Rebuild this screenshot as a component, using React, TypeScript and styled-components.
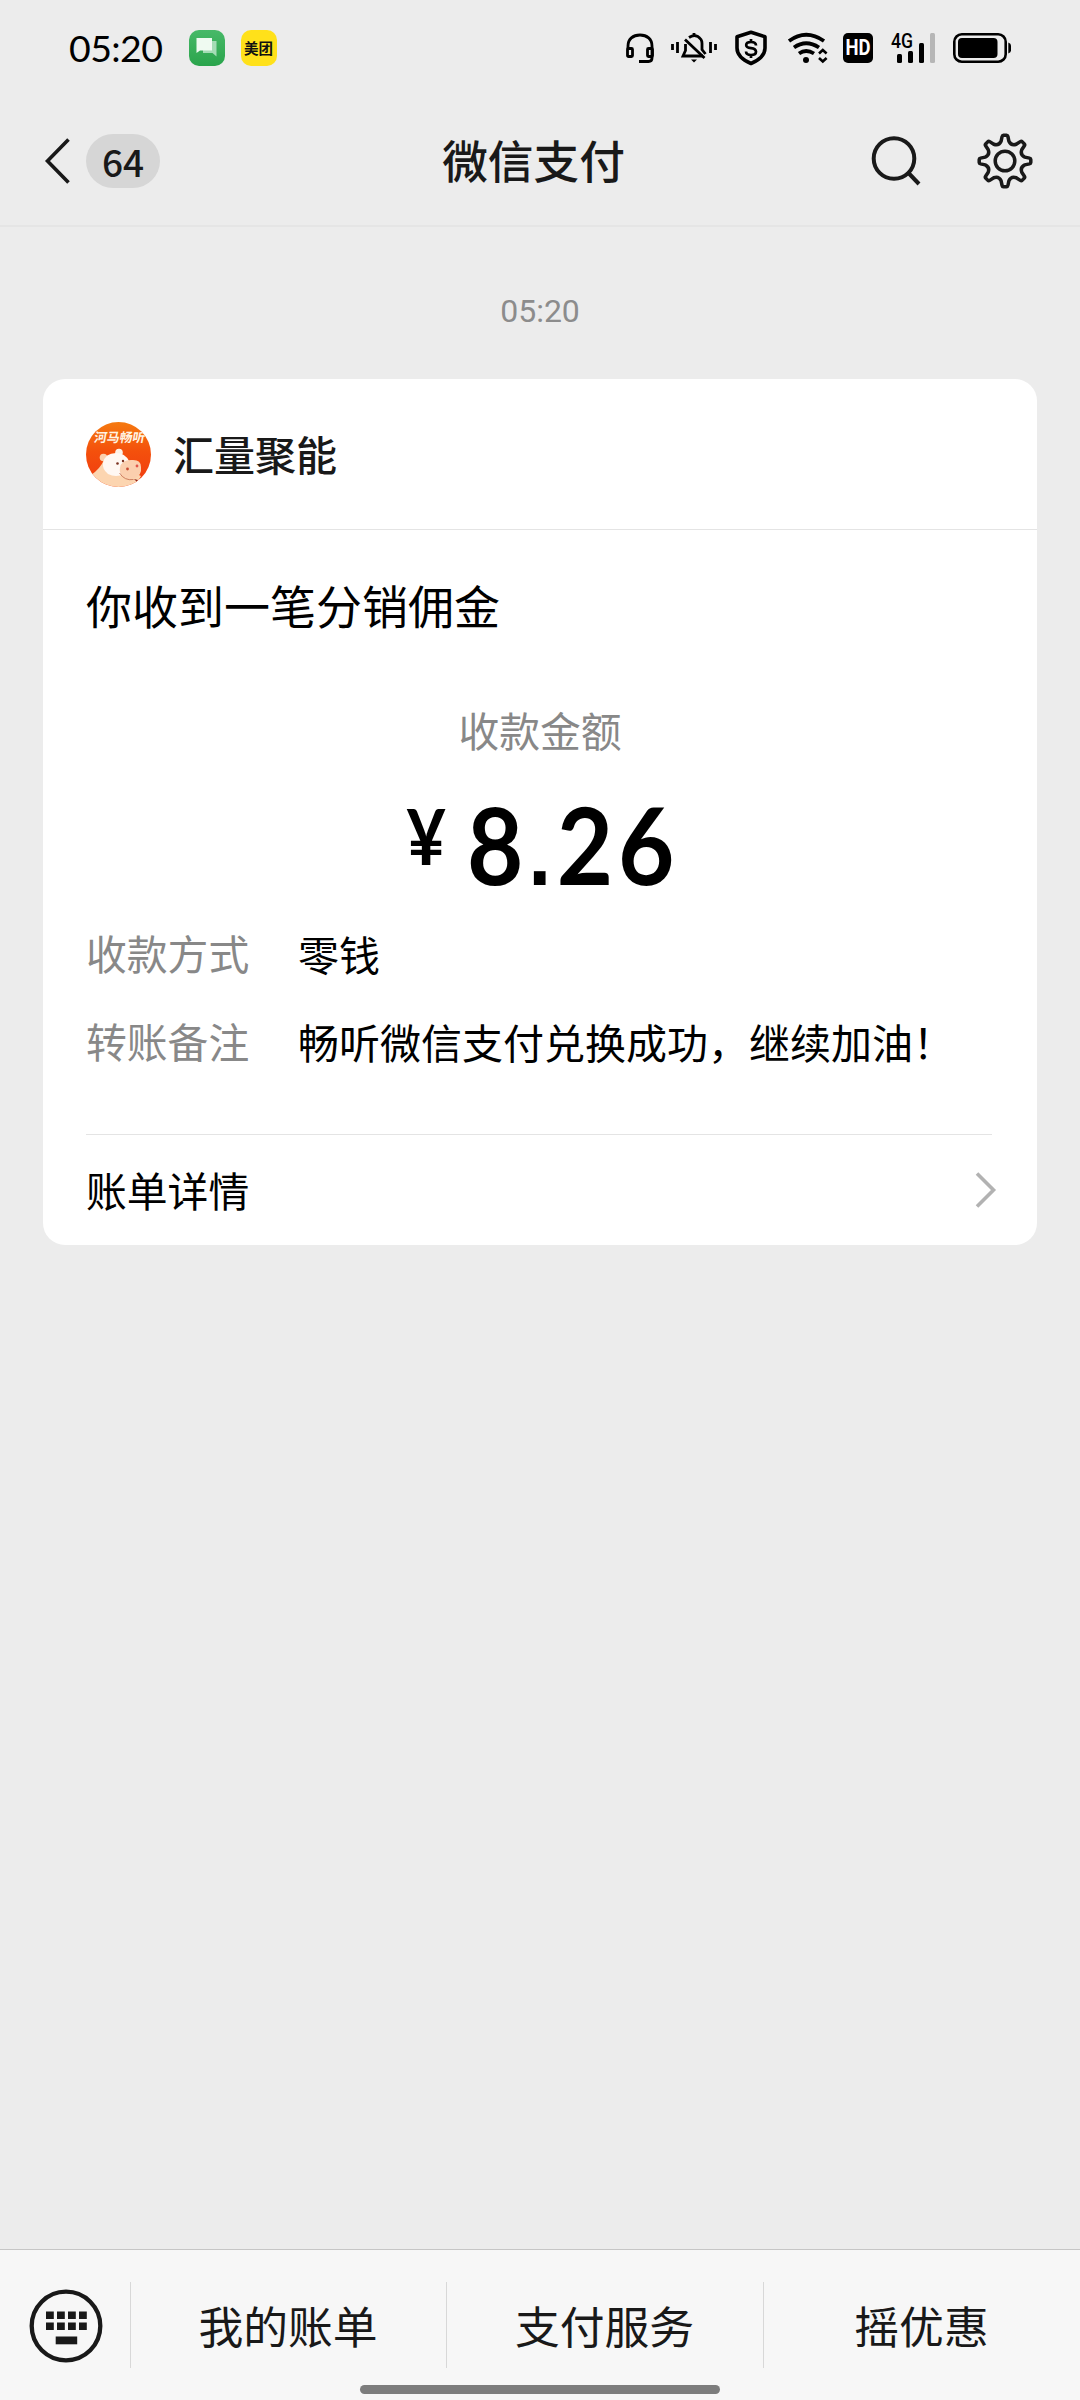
import React from "react";
import styled, { createGlobalStyle } from "styled-components";

const cjk = '"Noto Sans CJK SC", "Noto Sans", sans-serif';

const GlobalStyle = createGlobalStyle`
  * { box-sizing: border-box; }
  body { margin: 0; background: #ececec; }
  svg { display: block; flex: none; overflow: visible; }
`;

const Screen = styled.div`
  width: 1080px;
  height: 2400px;
  display: flex;
  flex-direction: column;
  background: #ececec;
  color: #191919;
  font-family: ${cjk};
  overflow: hidden;
`;

const StatusBar = styled.div`
  height: 96px;
  padding: 0 68px 0 69px;
  display: flex;
  align-items: center;
  justify-content: space-between;
`;

const StatusGroup = styled.div`
  display: flex;
  align-items: center;
`;

const Clock = styled.span`
  width: 120px;
  font: 400 37.5px/48px Lato, sans-serif;
  letter-spacing: -0.6px;
  color: #000;
`;

const AppBadge = styled.span<{ $bg: string }>`
  width: 36px;
  height: 36px;
  margin-right: 15.5px;
  border-radius: 10px;
  display: flex;
  align-items: center;
  justify-content: center;
  background: ${(p) => p.$bg};
  color: #111;
  font: 700 14.5px/20px ${cjk};
`;

const HdBadge = styled.span`
  width: 30px;
  height: 30px;
  margin-right: 18px;
  border-radius: 5px;
  display: flex;
  align-items: center;
  justify-content: center;
  background: #000;
`;

const HdText = styled.span`
  color: #fff;
  font: 700 22px/30px Roboto, sans-serif;
  transform: scaleX(0.84);
`;

const IconSlot = styled.span<{ $gap: number }>`
  margin-right: ${(p) => p.$gap}px;
`;

const NavBar = styled.header`
  height: 131px;
  padding: 0 47px 0 44px;
  display: grid;
  grid-template-columns: 1fr auto 1fr;
  align-items: start;
  border-bottom: 2px solid #e5e5e5;
`;

const NavSide = styled.div<{ $end?: boolean }>`
  height: 130px;
  display: flex;
  align-items: center;
  justify-content: ${(p) => (p.$end ? "flex-end" : "flex-start")};
  gap: ${(p) => (p.$end ? 56 : 15)}px;
`;

const Unread = styled.span`
  width: 74px;
  height: 54px;
  border-radius: 27px;
  display: flex;
  align-items: center;
  justify-content: center;
  background: #d6d6d6;
  font: 500 37px/50px ${cjk};
  padding-bottom: 1px;
`;

const Title = styled.h1`
  margin: 0 10px 0 0;
  font: 500 45.7px/126px ${cjk};
`;

const Chat = styled.main`
  flex: 1;
  padding: 0 43px;
`;

const Timestamp = styled.div`
  margin: 60px 0 44px;
  text-align: center;
  font: 400 32px/48px Roboto, sans-serif;
  color: #8c8c8c;
`;

const Card = styled.section`
  height: 866px;
  border-radius: 22px;
  background: #fff;
`;

const CardHeader = styled.div`
  height: 151px;
  padding: 0 43px;
  display: flex;
  align-items: center;
  gap: 22px;
  border-bottom: 1px solid #e4e4e4;
`;

const Merchant = styled.span`
  padding-bottom: 2px;
  font: 500 41px/60px ${cjk};
`;

const CardBody = styled.div`
  padding: 44px 43px 0;
  color: #000;
`;

const Headline = styled.div`
  font: 400 46px/60px ${cjk};
`;

const AmountLabel = styled.div`
  margin-top: 66px;
  text-align: center;
  font: 400 40.8px/60px ${cjk};
  color: #888;
`;

const Amount = styled.div`
  margin-top: 28px;
  height: 109px;
  display: flex;
  justify-content: center;
  align-items: flex-start;
  font: 700 108px/110px Lato, sans-serif;
`;

const Currency = styled.span`
  font-size: 76px;
  line-height: 95px;
  margin-right: 19px;
  transform: scaleX(0.9);
`;

const Digits = styled.span`
  letter-spacing: 5.5px;
  margin-right: -27px;
  transform: scaleX(0.9);
  transform-origin: left;
`;

const Point = styled.span`
  font-family: "Liberation Sans", sans-serif;
  font-size: 92px;
  font-weight: 700;
  letter-spacing: 6px;
`;

const Details = styled.dl`
  margin: 26px 0 63px;
  display: grid;
  grid-template-columns: 212px 1fr;
  row-gap: 28px;
  font: 400 40.8px/60px ${cjk};
`;

const Term = styled.dt`
  color: #888;
`;

const Value = styled.dd`
  margin: 0;
  white-space: nowrap;
  font-size: 41px;
`;

const BillLink = styled.div`
  height: 111px;
  margin-right: 2px;
  border-top: 1px solid #e4e4e4;
  display: flex;
  align-items: center;
  justify-content: space-between;
  font: 400 40.8px/60px ${cjk};
`;

const Chevron = styled.svg`
  margin-right: -3px;
`;

const MenuBar = styled.footer`
  position: relative;
  height: 151px;
  padding-top: 32px;
  border-top: 1px solid #c6c6c6;
  background: #f7f7f7;
  display: grid;
  grid-template-columns: 130px 316px 317px 317px;
`;

const KeyboardButton = styled.div`
  height: 88px;
  padding-left: 1px;
  display: flex;
  align-items: center;
  justify-content: center;
`;

const MenuItem = styled.div`
  height: 86px;
  padding-right: 1px;
  border-left: 1px solid #d8d8d8;
  text-align: center;
  font: 400 44.8px/86px ${cjk};
`;

const HomeHandle = styled.div`
  position: absolute;
  left: 360px;
  bottom: 6px;
  width: 360px;
  height: 9px;
  border-radius: 5px;
  background: #7d7d7d;
`;

const gearPath = (() => {
  const at = (deg: number, r: number, off: number) => {
    const a = (deg * Math.PI) / 180;
    return `${(28 + r * Math.sin(a) + off * Math.cos(a)).toFixed(2)} ${(28 - r * Math.cos(a) + off * Math.sin(a)).toFixed(2)}`;
  };
  let d = "";
  for (let k = 0; k < 8; k++) {
    const t = k * 45;
    d += `${k ? "L" : "M"}${at(t, 19.8, -3.9)} L${at(t, 24.5, -2.9)} Q${at(t, 25.8, -2.6)} ${at(t, 25.8, -1.6)} L${at(t, 25.8, 1.6)} Q${at(t, 25.8, 2.6)} ${at(t, 24.5, 2.9)} L${at(t, 19.8, 3.9)} Q${at(t + 22.5, 16.2, 0)} ${at(t + 45, 19.8, -3.9)} `;
  }
  return d + "Z";
})();

const Messages = () => (
  <svg width="24" height="24" viewBox="0 0 24 24">
    <path d="M8 5h13.5v15.5L17.5 17H8z" fill="#a4dcb5" />
    <path d="M1.500 2H17v12.500H5L1.500 17z" fill="#effaf1" />
  </svg>
);

const Headset = () => (
  <svg width="30" height="32" viewBox="0 0 30 32" fill="none" stroke="#000">
    <path d="M3 17v-3C3 7 8 3 15 3s12 4 12 11v12q0 3.500-3.500 3.500H14" strokeWidth="2.8" />
    <rect x="2.500" y="16.500" width="5" height="8" rx="1" strokeWidth="2.8" />
    <rect x="22.500" y="16.500" width="5" height="8" rx="1" strokeWidth="2.8" />
  </svg>
);

const MutedBell = () => (
  <svg width="46" height="32" viewBox="0 0 46 32" fill="none" stroke="#000" strokeWidth="2.8">
    <path d="M1.500 12v6M6.500 10v11M39.500 10v11M44.500 12v6M14 7.500l19.500 18.500" />
    <path d="M14.500 12v6.500l-2.500 5.500h20M18 5.500q7-4.500 12 2 1 1.500 1 4v6l3.500 4.500" />
    <path d="M23 1v3" />
    <path d="M20 27.500h6l-3 3z" fill="#000" stroke="none" />
  </svg>
);

const Shield = () => (
  <svg width="34" height="36" viewBox="0 0 34 36" fill="none" stroke="#000">
    <path d="M17 2.300L31 6.800V18q0 9.500-14 15.500Q3 27.500 3 18V6.800z" strokeWidth="3.600" strokeLinejoin="round" />
    <path d="M22 15.500q0-3.500-5-3.500-4.800 0-4.800 3 0 2.600 4.800 3.200t5 3.500q0 3.300-5 3.300-4.800 0-5-3.500M17 9v3.500M17 24.500v3.500" strokeWidth="2.700" />
  </svg>
);

const Wifi = () => (
  <svg width="42" height="32" viewBox="0 0 42 32" fill="none" stroke="#000" strokeWidth="3.800">
    <path d="M2 9q17-12.500 35 0M7 15.500q12-8.500 25 0M12 21.500q7-5 15 0" />
    <circle cx="19" cy="28" r="3" fill="#000" stroke="none" />
    <path d="M32 21.500l3.800-3.500 3.800 3.500M32 26l3.800 3.500 3.800-3.500" strokeWidth="2.600" />
  </svg>
);

const Signal = () => (
  <svg width="44" height="32" viewBox="0 0 44 32">
    <text x="0" y="16" fontFamily="Roboto, sans-serif" fontWeight="500" fontSize="20" textLength="22" lengthAdjust="spacingAndGlyphs">4G</text>
    <rect x="6" y="22" width="5" height="9" rx="1.500" />
    <rect x="17" y="19" width="5" height="12" rx="1.500" />
    <rect x="28" y="11" width="5" height="20" rx="1.500" />
    <rect x="39" y="1" width="5" height="30" rx="1.500" fill="#b6b6b6" />
  </svg>
);

const Battery = () => (
  <svg width="59" height="30" viewBox="0 0 59 30">
    <rect x="1.300" y="1.300" width="51.400" height="27.400" rx="7.500" fill="none" stroke="#000" strokeWidth="2.600" />
    <rect x="5" y="5" width="39.500" height="20" rx="4" />
    <path d="M55.300 9.500q2.700 1 2.700 3v5q0 2-2.700 3z" />
  </svg>
);

const Avatar = () => (
  <svg width="65" height="65" viewBox="0 0 65 65">
    <defs>
      <clipPath id="avatarClip"><circle cx="32.500" cy="32.500" r="32.500" /></clipPath>
      <linearGradient id="avatarSky" x1="0" y1="0" x2="0" y2="1">
        <stop offset="0" stopColor="#f57a10" />
        <stop offset="0.450" stopColor="#f4500c" />
        <stop offset="1" stopColor="#f03a10" />
      </linearGradient>
    </defs>
    <g clipPath="url(#avatarClip)">
      <rect width="65" height="65" fill="url(#avatarSky)" />
      <path d="M5 53Q14 47 18 38L46 50 55 54Q50 66 28 66 12 66 5 53z" fill="#fcd5b0" />
      <circle cx="17.500" cy="35.500" r="3.800" fill="#fbd0ae" />
      <circle cx="33" cy="30.500" r="3.800" fill="#fdf1e6" />
      <path d="M17 41Q19 31 30 31 39 31 43 39L38 52Q30 56 22 52 16 47 17 41z" fill="#fff8f3" />
      <path d="M34 46Q35 38 45 38 55 37 55 45 56 53 49 56 41 59 36 54 33 50 34 46z" fill="#fbcfae" />
      <path d="M33.500 51q5 8 14 6.500" fill="none" stroke="#c0684a" strokeWidth="0.800" />
      <path d="M48 57l4 1-1 2z" fill="#8e2419" />
      <circle cx="31.500" cy="41.500" r="1.300" fill="#7b3220" />
      <circle cx="37" cy="39" r="1.200" fill="#7b3220" />
      <circle cx="41.500" cy="47" r="1.400" fill="#c94b32" />
      <circle cx="51" cy="44" r="1.400" fill="#e0554a" />
      <text x="0" y="0" transform="translate(7.500 19.500) skewX(-10)" fontFamily={cjk} fontWeight="700" fontSize="12.800" fill="#fff3e2">河马畅听</text>
    </g>
  </svg>
);

const details = [
  { term: "收款方式", value: "零钱" },
  { term: "转账备注", value: "畅听微信支付兑换成功，继续加油！" },
];

const menu = ["我的账单", "支付服务", "摇优惠"];

export default function App() {
  return (
    <>
      <GlobalStyle />
      <Screen lang="zh-CN">
        <StatusBar>
          <StatusGroup>
            <Clock>05:20</Clock>
            <AppBadge $bg="linear-gradient(#47b968, #2aa44c)"><Messages /></AppBadge>
            <AppBadge $bg="#ffe11a">美团</AppBadge>
          </StatusGroup>
          <StatusGroup>
            <IconSlot $gap={16}><Headset /></IconSlot>
            <IconSlot $gap={17}><MutedBell /></IconSlot>
            <IconSlot $gap={19}><Shield /></IconSlot>
            <IconSlot $gap={14}><Wifi /></IconSlot>
            <HdBadge><HdText>HD</HdText></HdBadge>
            <IconSlot $gap={18}><Signal /></IconSlot>
            <Battery />
          </StatusGroup>
        </StatusBar>

        <NavBar>
          <NavSide>
            <svg width="27" height="46" viewBox="0 0 27 46" fill="none" stroke="#191919" strokeWidth="3.600">
              <path d="M24.500 1.500L3.500 23l21 21.500" />
            </svg>
            <Unread>64</Unread>
          </NavSide>
          <Title>微信支付</Title>
          <NavSide $end>
            <svg width="50" height="50" viewBox="0 0 50 50" fill="none" stroke="#191919" strokeWidth="4">
              <circle cx="23" cy="22.500" r="20.300" />
              <path d="M37.500 37L48 48" />
            </svg>
            <svg width="56" height="56" viewBox="0 0 56 56" fill="none" stroke="#191919" strokeWidth="3.500" strokeLinejoin="round">
              <path d={gearPath} />
              <circle cx="28" cy="28" r="9.800" />
            </svg>
          </NavSide>
        </NavBar>

        <Chat>
          <Timestamp>05:20</Timestamp>
          <Card>
            <CardHeader>
              <Avatar />
              <Merchant>汇量聚能</Merchant>
            </CardHeader>
            <CardBody>
              <Headline>你收到一笔分销佣金</Headline>
              <AmountLabel>收款金额</AmountLabel>
              <Amount>
                <Currency>¥</Currency>
                <Digits>8<Point>.</Point>26</Digits>
              </Amount>
              <Details>
                {details.map((d) => (
                  <React.Fragment key={d.term}>
                    <Term>{d.term}</Term>
                    <Value>{d.value}</Value>
                  </React.Fragment>
                ))}
              </Details>
              <BillLink>
                账单详情
                <Chevron width="20" height="36" viewBox="0 0 20 36" fill="none" stroke="#b2b2b2" strokeWidth="3.600">
                  <path d="M2 1.500L18.500 18 2 34.500" />
                </Chevron>
              </BillLink>
            </CardBody>
          </Card>
        </Chat>

        <MenuBar>
          <KeyboardButton>
            <svg width="74" height="74" viewBox="0 0 74 74" fill="#191919">
              <circle cx="37" cy="37" r="34.300" fill="none" stroke="#191919" strokeWidth="4.300" />
              {[0, 1].map((row) =>
                [0, 1, 2, 3].map((col) => (
                  <rect key={`${row}-${col}`} x={17 + col * 11} y={22.500 + row * 11} width="7.800" height="7.500" />
                ))
              )}
              <rect x="26.700" y="47.500" width="21.500" height="7.800" />
            </svg>
          </KeyboardButton>
          {menu.map((label) => (
            <MenuItem key={label}>{label}</MenuItem>
          ))}
          <HomeHandle />
        </MenuBar>
      </Screen>
    </>
  );
}
